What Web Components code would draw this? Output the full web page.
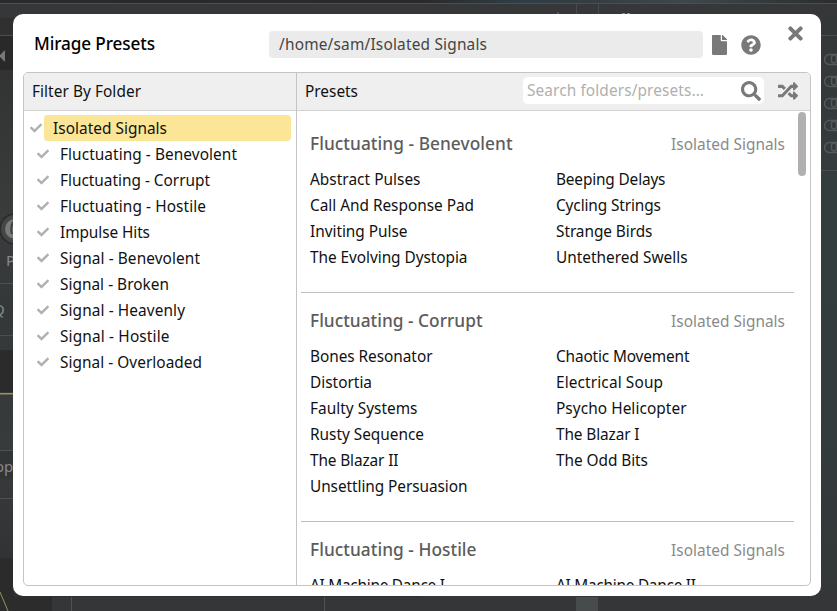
<!DOCTYPE html>
<html lang="en">
<head>
<meta charset="utf-8">
<title>Mirage Presets</title>
<style>
html,body{margin:0;height:100%;overflow:hidden}
body{font-family:"Noto Sans","Open Sans",sans-serif;font-size:15.4px;line-height:26px;color:#111}
</style>
</head>
<body>
<preset-app></preset-app>
<script>
/* A single line of text tracked out to an exact width. */
class FitText extends HTMLElement{
  connectedCallback(){
    const root=this.attachShadow({mode:'open'});
    root.innerHTML='<style>:host{display:block;white-space:pre}span{display:inline-block}</style><span><slot></slot></span>';
    const w=parseFloat(this.getAttribute('w'));
    if(!w)return;
    const s=root.querySelector('span');
    const n=this.textContent.length;
    s.style.letterSpacing=((w-s.getBoundingClientRect().width)/(n-1))+'px';
    s.style.marginRight='-4px';
  }
}
customElements.define('fit-text',FitText);

const ICONS={
  check:[512,512,'M173.898 439.404l-166.4-166.4c-9.997-9.997-9.997-26.206 0-36.204l36.203-36.204c9.997-9.998 26.207-9.998 36.204 0L192 312.69 432.095 72.596c9.997-9.997 26.207-9.997 36.204 0l36.203 36.204c9.997 9.997 9.997 26.206 0 36.204l-294.4 294.401c-9.998 9.997-26.207 9.997-36.204-.001z'],
  file:[384,512,'M224 136V0H24C10.700 0 0 10.700 0 24v464c0 13.300 10.700 24 24 24h336c13.300 0 24-10.700 24-24V160H248c-13.200 0-24-10.800-24-24zm160-14.100v6.100H256V0h6.100c6.400 0 12.500 2.500 17 7l97.900 98c4.500 4.500 7 10.600 7 16.900z'],
  help:[512,512,'M504 256c0 136.997-111.043 248-248 248S8 392.997 8 256C8 119.083 119.043 8 256 8s248 111.083 248 248zM262.655 90c-54.497 0-89.255 22.957-116.549 63.758-3.536 5.286-2.353 12.415 2.715 16.258l34.699 26.310c5.205 3.947 12.621 3.008 16.665-2.122 17.864-22.658 30.113-35.797 57.303-35.797 20.429 0 45.698 13.148 45.698 32.958 0 14.976-12.363 22.667-32.534 33.976C247.128 238.528 216 254.941 216 296v4c0 6.627 5.373 12 12 12h56c6.627 0 12-5.373 12-12v-1.333c0-28.462 83.186-29.647 83.186-106.667 0-58.002-60.165-102-116.531-102zM256 338c-25.365 0-46 20.635-46 46 0 25.364 20.635 46 46 46s46-20.636 46-46c0-25.365-20.635-46-46-46z'],
  close:[352,512,'M242.720 256l100.070-100.070c12.280-12.280 12.280-32.190 0-44.480l-22.240-22.240c-12.280-12.280-32.190-12.280-44.480 0L176 189.280 75.930 89.210c-12.280-12.280-32.190-12.280-44.480 0L9.210 111.450c-12.280 12.280-12.280 32.190 0 44.480L109.280 256 9.210 356.070c-12.280 12.280-12.280 32.190 0 44.480l22.240 22.240c12.280 12.280 32.200 12.280 44.480 0L176 322.720l100.070 100.070c12.280 12.280 32.200 12.280 44.480 0l22.240-22.240c12.280-12.280 12.280-32.190 0-44.480L242.720 256z'],
  search:[512,512,'M505 442.700L405.300 343c-4.500-4.500-10.600-7-17-7H372c27.600-35.300 44-79.700 44-128C416 93.100 322.900 0 208 0S0 93.100 0 208s93.100 208 208 208c48.300 0 92.700-16.400 128-44v16.300c0 6.400 2.500 12.500 7 17l99.700 99.700c9.400 9.400 24.600 9.400 33.900 0l28.300-28.300c9.400-9.400 9.400-24.600.1-34zM208 336c-70.700 0-128-57.200-128-128 0-70.700 57.200-128 128-128 70.700 0 128 57.200 128 128 0 70.700-57.200 128-128 128z'],
  shuffle:[512,512,'M504.971 359.029c9.373 9.373 9.373 24.569 0 33.941l-80 79.984c-15.010 15.010-40.971 4.490-40.971-16.971V416h-58.785a12.004 12.004 0 0 1-8.773-3.812l-70.556-75.596 53.333-57.143L352 336h32v-39.981c0-21.438 25.943-31.998 40.971-16.971l80 79.981zM12 176h84l52.781 56.551 53.333-57.143-70.556-75.596A11.999 11.999 0 0 0 122.785 96H12c-6.627 0-12 5.373-12 12v56c0 6.627 5.373 12 12 12zm372 0v39.984c0 21.460 25.961 31.980 40.971 16.971l80-79.984c9.373-9.373 9.373-24.569 0-33.941l-80-79.981C409.943 24.021 384 34.582 384 56.019V96h-58.785a12.004 12.004 0 0 0-8.773 3.812L96 336H12c-6.627 0-12 5.373-12 12v56c0 6.627 5.373 12 12 12h110.785c3.326 0 6.503-1.381 8.773-3.812L352 176h32z']
};
class UiIcon extends HTMLElement{
  connectedCallback(){
    const [w,h,d]=ICONS[this.getAttribute('name')];
    this.attachShadow({mode:'open'}).innerHTML=`<style>:host{display:block;flex:none;color:#797979}svg{display:block;width:100%;height:100%}</style><svg viewBox="0 0 ${w} ${h}" fill="currentColor"><path d="${d}"/></svg>`;
  }
}
customElements.define('ui-icon',UiIcon);

/* The dimmed synth interface behind the dialog. */
class SynthBackdrop extends HTMLElement{
  constructor(){
    super();
    const slots=[59.500,81.500,103.500,125.500,147.500].map(y=>`<rect x="824.500" y="${y-5}" width="20" height="10" rx="5"/><path d="M831.500 ${y+1}v-3a2.500 2.500 0 0 1 5 0v3a2.500 2.500 0 0 1-5 0"/>`).join('');
    this.attachShadow({mode:'open'}).innerHTML=`<style>:host{display:block}svg{display:block}text{font-family:"Noto Sans",sans-serif;font-size:15px;fill:#85888a}</style>
<svg width="837" height="611" viewBox="0 0 837 611">
<defs>
<linearGradient id="l" x1="0" y1="0" x2="0" y2="1"><stop offset="0" stop-color="#2e2e2e"/><stop offset=".35" stop-color="#3a3c3c"/><stop offset=".5" stop-color="#353839"/><stop offset=".75" stop-color="#383b3c"/><stop offset="1" stop-color="#2d2e2f"/></linearGradient>
<linearGradient id="r" x1="0" y1="0" x2="0" y2="1"><stop offset="0" stop-color="#343637"/><stop offset=".3" stop-color="#343d3e"/><stop offset=".7" stop-color="#333b3c"/><stop offset="1" stop-color="#343738"/></linearGradient>
<linearGradient id="t"><stop offset="0" stop-color="#2a2a2a"/><stop offset=".5" stop-color="#2b2829"/><stop offset=".62" stop-color="#2d3e45"/><stop offset=".7" stop-color="#343e42"/><stop offset=".82" stop-color="#3e484c"/><stop offset="1" stop-color="#2a2d2e"/></linearGradient>
</defs>
<rect width="420" height="611" fill="url(#l)"/><rect x="420" width="417" height="611" fill="url(#r)"/>
<rect y="4" width="837" height="14" fill="#363738"/><rect width="837" height="3" fill="url(#t)"/><path d="M0 3.500H837" stroke="#4c4f50"/>
<path d="M576.500 4v10M598.500 4v10" stroke="#484b4c"/><path d="M558 12.500v1.500M622 13.500h3M627 13.500h3" stroke="#8a8d8e"/>
<rect y="36" width="13" height="34" fill="#292929"/><path d="M0 35.500H13M820 35.500h17M820 170.500h17" stroke="#4b4e50"/>
<path d="M5 50v12l-6-6z" fill="#777"/>
<circle cx="15" cy="229" r="15" fill="#454646" stroke="#2c2e2e" stroke-width="2"/><circle cx="15" cy="229" r="10" fill="#777b7b"/><path d="M13 222q-3 6-1 12" stroke="#404242" fill="none" stroke-width="2"/>
<path d="M0 283.500H13M0 335.500H13M0 450.500H13M0 498.500H13" stroke="#4c5050"/>
<rect y="350" width="13" height="42" fill="#2b2b2c"/><rect y="451" width="13" height="28" fill="#323536"/>
<rect y="558" width="13" height="53" fill="#2b2b2b"/>
<text x="6" y="266">P</text><text x="-7" y="315">Q</text><text x="-5" y="472">op</text>
<rect y="393" width="13" height="1.500" fill="#98935a"/>
<rect y="597" width="837" height="14" fill="#343637"/><rect y="597" width="52" height="14" fill="#2c2c2c"/><path d="M0 592l8 19" stroke="#98935a"/><path d="M71.500 597v14M324.500 597v14" stroke="#505354"/><rect x="576" y="597" width="22" height="14" fill="#484b4b"/>
<g fill="none" stroke="#555a5b" stroke-width="1.300">${slots}</g>
</svg>`;
  }
}
customElements.define('synth-backdrop',SynthBackdrop);

class FolderRow extends HTMLElement{
  connectedCallback(){
    this.attachShadow({mode:'open'}).innerHTML=`<style>
:host{display:flex;align-items:center;height:26px;padding-left:13px}
ui-icon{width:12px;height:12px;color:#b0b0b0}
div{flex:1;padding-left:11px;height:26px;line-height:28px;border-radius:4px}
:host([selected]){padding-left:6px}
:host([selected]) div{background:#fbe596;margin:0 5px 0 2px;padding-left:9px}
</style><ui-icon name="check"></ui-icon><div><slot></slot></div>`;
  }
}
customElements.define('folder-row',FolderRow);

class PresetGroup extends HTMLElement{
  connectedCallback(){
    this.attachShadow({mode:'open'}).innerHTML=`<style>
:host{display:block;margin:0 16px 0 4px;padding:15px 9px 21px;border-bottom:1px solid #bdbdbd}
:host(:first-child){padding-top:20px}
header{display:flex;justify-content:space-between;align-items:center;height:26px;margin-bottom:10px}
.t{font-size:17.300px;font-weight:500;color:#5c5c5c}
.s{color:#8a8a8a;padding-top:1px}
.g{display:grid;grid-template-columns:246px 1fr;grid-auto-rows:26px;line-height:26px}
</style><header><div class="t"><slot name="title"></slot></div><div class="s"><fit-text w="114" style="width:114px">Isolated Signals</fit-text></div></header><div class="g"><slot></slot></div>`;
  }
}
customElements.define('preset-group',PresetGroup);

const FOLDERS=[['Isolated Signals',114],['Fluctuating - Benevolent',177],['Fluctuating - Corrupt',150],['Fluctuating - Hostile',146],['Impulse Hits',90],['Signal - Benevolent',140],['Signal - Broken',109],['Signal - Heavenly',125],['Signal - Hostile',109.500],['Signal - Overloaded',142]];
const GROUPS=[
 ['Fluctuating - Benevolent',202.500,[['Abstract Pulses',110.500],['Beeping Delays',109.500],['Call And Response Pad',164],['Cycling Strings',105],['Inviting Pulse',97.500],['Strange Birds',96.500],['The Evolving Dystopia',157.500],['Untethered Swells',131.500]]],
 ['Fluctuating - Corrupt',172.500,[['Bones Resonator',122.500],['Chaotic Movement',133.500],['Distortia',62],['Electrical Soup',107],['Faulty Systems',107.500],['Psycho Helicopter',130.500],['Rusty Sequence',114],['The Blazar I',83.500],['The Blazar II',88.500],['The Odd Bits',92],['Unsettling Persuasion',157.500]]],
 ['Fluctuating - Hostile',166.500,[['AI Machine Dance I',135],['AI Machine Dance II',140]]]
];
class PresetDialog extends HTMLElement{
  connectedCallback(){
    this.attachShadow({mode:'open'}).innerHTML=`<style>
:host{display:flex;flex-direction:column;box-sizing:border-box;width:808px;height:582px;background:#fff;border-radius:10px;padding:0 10px 10px}
.top{height:58px;flex:none;display:flex;align-items:flex-start}
.title{width:235px;box-sizing:border-box;padding:17px 0 0 11px;margin-right:11px;font-size:17.200px;font-weight:500;color:#000}
.path{box-sizing:border-box;width:434px;height:27px;line-height:27px;margin-top:17px;padding-left:10px;background:#ebebeb;border-radius:4px;color:#444}
.file{width:15px;height:20px;margin:21px 0 0 9px}
.help{width:20px;height:20px;margin:21px 0 0 14px}
.close{width:15px;height:21px;margin:9px 0 0 27px}
.panel{box-sizing:border-box;flex:1;min-height:0;display:grid;grid-template-columns:272px 1fr;grid-template-rows:38px 1fr;border:1px solid #c4c4c4;border-radius:5px;overflow:hidden}
.h{box-sizing:border-box;background:#efefef;border-bottom:1.500px solid #d2d2d2;display:flex;align-items:center;padding-left:8px}
.r{border-left:1px solid #c4c4c4}
.search{box-sizing:border-box;width:241px;height:27px;margin:0 14px 2px auto;background:#fff;border-radius:5px;display:flex;align-items:center;padding:0 3px 0 4px;color:#b0b0b0}
.search fit-text{flex:1}
.search ui-icon{width:20px;height:20px}
.sh{width:20px;height:20px;margin:0 12px 2px 0}
.folders{padding-top:4px}
.list{min-height:0;overflow:hidden;display:flex}
.groups{flex:1;min-width:0}
.thumb{width:8px;height:64px;border-radius:4px;background:#b0b0b0;margin:1px 4px 0 -12px}
</style>
<div class="top"><div class="title"><fit-text w="121">Mirage Presets</fit-text></div><div class="path"><fit-text w="208">/home/sam/Isolated Signals</fit-text></div><ui-icon class="file" name="file"></ui-icon><ui-icon class="help" name="help"></ui-icon><ui-icon class="close" name="close"></ui-icon></div>
<div class="panel">
<div class="h"><fit-text w="109">Filter By Folder</fit-text></div>
<div class="h r"><fit-text w="53">Presets</fit-text><div class="search"><fit-text w="177">Search folders/presets...</fit-text><ui-icon name="search"></ui-icon></div><ui-icon class="sh" name="shuffle"></ui-icon></div>
<div class="folders">${FOLDERS.map(([t,w],i)=>`<folder-row ${i?'':'selected'}><fit-text w="${w}">${t}</fit-text></folder-row>`).join('')}</div>
<div class="list r"><div class="groups">${GROUPS.map(([t,w,p])=>`<preset-group><fit-text slot="title" w="${w}">${t}</fit-text>${p.map(([n,x])=>`<fit-text w="${x}">${n}</fit-text>`).join('')}</preset-group>`).join('')}</div><div class="thumb"></div></div>
</div>`;
  }
}
customElements.define('preset-dialog',PresetDialog);

class PresetApp extends HTMLElement{
  constructor(){
    super();
    this.attachShadow({mode:'open'}).innerHTML=`<style>
:host{display:grid;width:837px;height:611px;overflow:hidden}
synth-backdrop,preset-dialog{grid-area:1/1}
preset-dialog{margin:14px 0 0 13px;z-index:1}
</style><synth-backdrop></synth-backdrop><preset-dialog></preset-dialog>`;
  }
}
customElements.define('preset-app',PresetApp);
</script>
</body>
</html>
